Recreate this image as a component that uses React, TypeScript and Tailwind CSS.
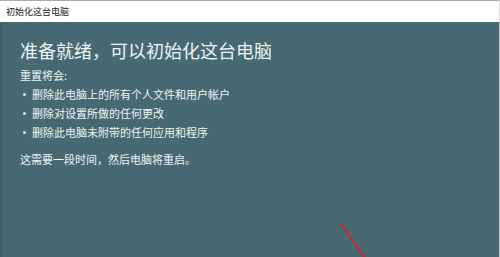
const font = { fontFamily: '"Noto Sans CJK SC", "Noto Sans", sans-serif' };

const items = [
  '删除此电脑上的所有个人文件和用户帐户',
  '删除对设置所做的任何更改',
  '删除此电脑未附带的任何应用和程序',
];

export default function App() {
  return (
    <div className="relative w-[500px] h-[257px] overflow-hidden flex flex-col bg-[#476a72]" style={font}>
      {/* Title bar */}
      <div className="h-[22px] shrink-0 bg-white border-t border-[#a9a9a9] flex items-center pl-[6px] border-r border-r-[#d8dcdc]">
        <span className="text-[9px] leading-none text-[#222]">初始化这台电脑</span>
      </div>

      {/* Body */}
      <div className="flex-1 bg-[#476a72] border-l-2 border-l-[#3e5f66] border-r border-r-[#b9c6c9] pl-[18px] pt-[16px] text-[#eef3f4]">
        <h1 className="text-[18px] leading-[24px] font-normal">准备就绪，可以初始化这台电脑</h1>
        <p className="mt-[4px] text-[11px] leading-[19px]">重置将会:</p>
        <ul className="text-[11px] leading-[19px]">
          {items.map((t) => (
            <li key={t} className="flex items-center">
              <span className="w-[12px] pl-[3px] flex items-center">
                <span className="w-[3px] h-[3px] rounded-full bg-[#dfe7e9]" />
              </span>
              <span>{t}</span>
            </li>
          ))}
        </ul>
        <p className="mt-[8px] text-[11px] leading-[19px]">这需要一段时间，然后电脑将重启。</p>
      </div>

      {/* Red annotation stroke */}
      <svg className="absolute left-0 top-0 pointer-events-none" width="500" height="257" viewBox="0 0 500 257">
        <line x1="341" y1="224" x2="365" y2="258" stroke="#b3323e" strokeWidth="2.5" strokeLinecap="round" />
      </svg>
    </div>
  );
}
